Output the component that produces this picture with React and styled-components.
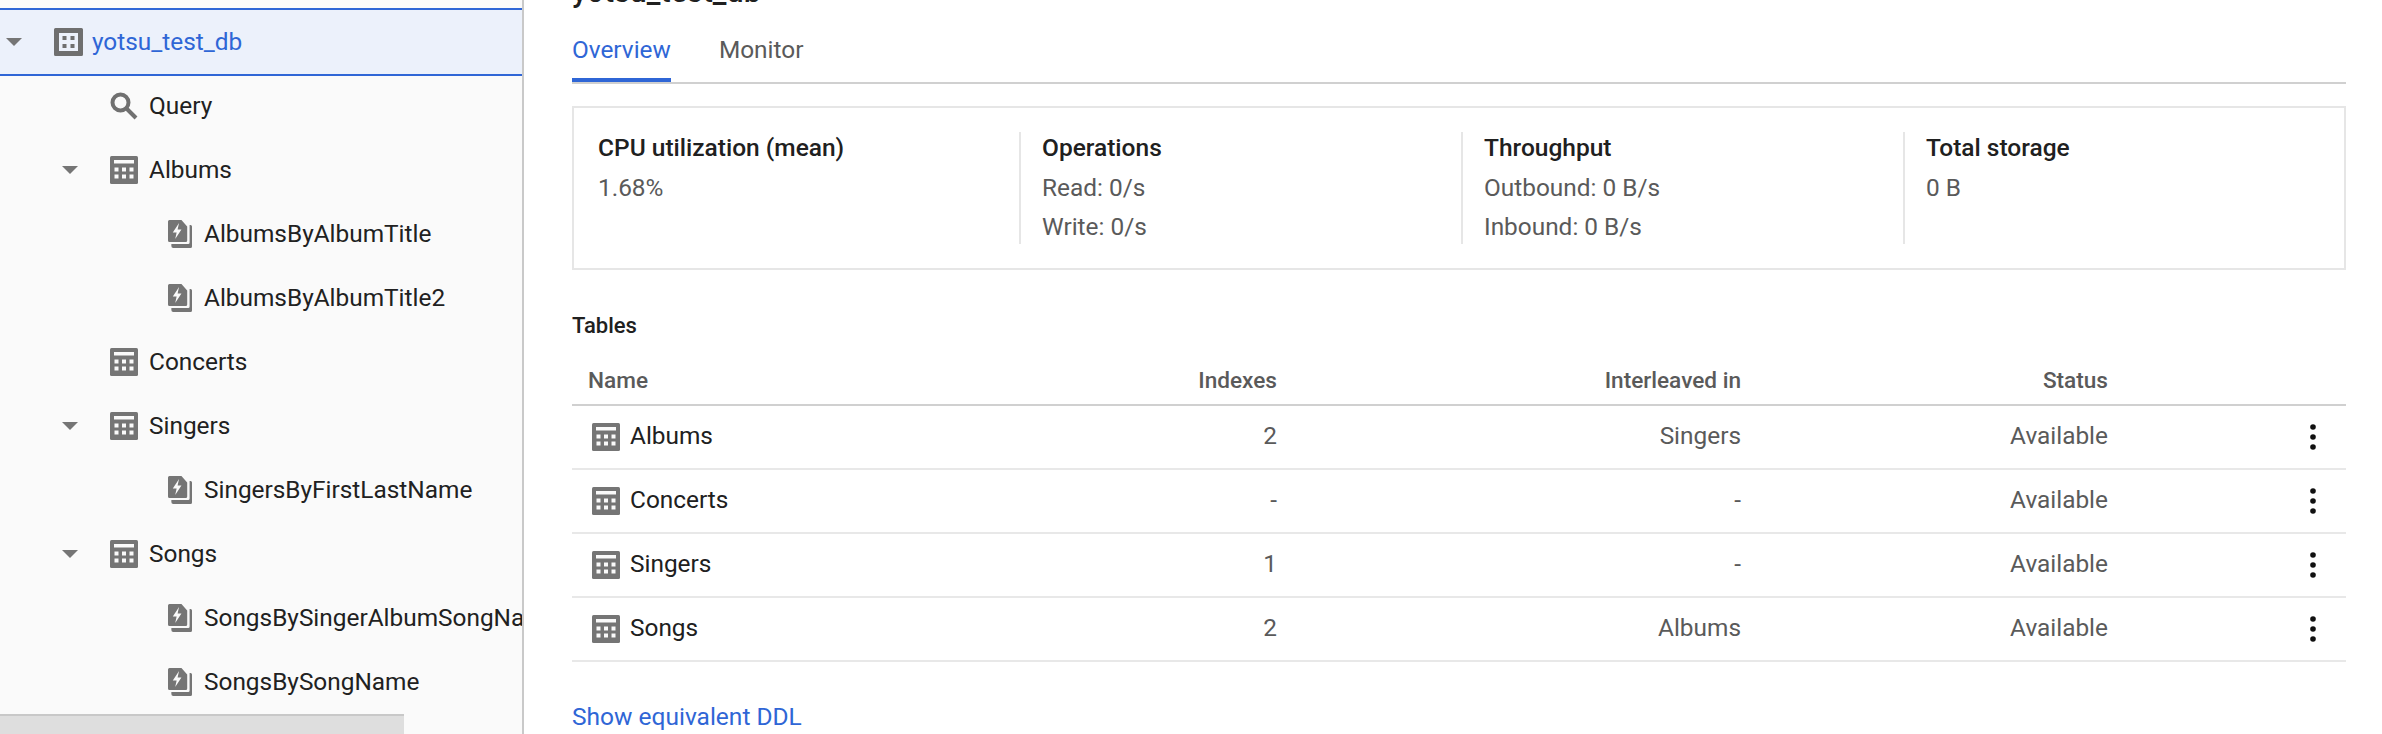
import React from 'react';
import styled, { createGlobalStyle } from 'styled-components';

const Global = createGlobalStyle`
  html, body { margin: 0; padding: 0; height: 734px; overflow: hidden; background: #fff; }
  body { font-family: Roboto, "Liberation Sans", sans-serif; }
`;
const Page = styled.div`display: flex; width: 2382px; height: 734px; overflow: hidden;`;
const Sidebar = styled.aside`
  width: 522px; flex: none; height: 726px; background: #fafafa; border-right: 2px solid #c9c9c9;
  display: flex; flex-direction: column; padding-top: 8px;
`;
const Tree = styled.div`flex: 1; overflow: hidden;`;
const TreeRow = styled.div`
  display: flex; align-items: center; height: 64px; white-space: nowrap; overflow: hidden;
  padding-left: ${p => p.$indent}px; font-size: 24.4px; color: #212121;
`;
const SelectedRow = styled(TreeRow)`
  background: #ecf1fb; color: #2f66d6; margin-bottom: -2px; position: relative;
  border-top: 2px solid #2f66d6; border-bottom: 2px solid #2f66d6;
`;
const CaretSlot = styled.span`display: flex; width: ${p => p.$w}px; flex: none;`;
const Label = styled.span`margin-left: ${p => p.$gap}px; padding-bottom: 2px;`;
const ScrollTrack = styled.div`height: 20px; flex: none; background: #fafafa;`;
const ScrollThumb = styled.div`width: 404px; height: 18px; background: #dedede; border-top: 2px solid #c8c8c8;`;

const Main = styled.main`flex: 1; min-width: 0; padding: 0 36px 0 48px; color: #212121;`;
const Title = styled.h1`margin: -27px 0 27px; height: 38px; line-height: 38px; font-size: 30.5px; font-weight: 500; color: #202020; white-space: nowrap;`;
const Tabs = styled.nav`display: flex; gap: 48px; box-sizing: border-box; height: 46px; border-bottom: 2px solid #d0d0d0;`;
const Tab = styled.span`
  box-sizing: border-box; height: 44px; line-height: 24px;
  font-size: 24.4px; color: ${p => p.$active ? '#2f66d6' : '#5a5a5a'};
  border-bottom: 4px solid ${p => p.$active ? '#2f66d6' : 'transparent'};
`;
const Summary = styled.section`
  margin-top: 22px; height: 164px; box-sizing: border-box; border: 2px solid #e6e6e6;
  padding-top: 24px; display: grid; grid-template-columns: 445px 442px 442px 1fr;
`;
const Cell = styled.div`
  height: 112px; box-sizing: border-box; padding-left: ${p => p.$first ? 24 : 21}px;
  border-left: ${p => p.$first ? 'none' : '2px solid #e6e6e6'};
`;
const CellTitle = styled.div`height: 32px; line-height: 32px; font-size: 24.5px; font-weight: 500; color: #202020;`;
const CellValue = styled.div`height: 40px; line-height: 40px; font-size: 24.4px; color: #5a5a5a; margin-top: ${p => p.$first ? 4 : -1}px;`;
const SectionLabel = styled.h2`margin: 44px 0 22px; height: 24px; line-height: 24px; font-size: 22px; font-weight: 500; color: #202020;`;
const Row = styled.div`
  display: grid; grid-template-columns: 400px 305px 464px 367px 1fr; align-items: center;
  height: ${p => p.$head ? 40 : 62}px; padding-bottom: ${p => p.$head ? 4 : 0}px;
  border-bottom: 2px solid ${p => p.$head ? '#d0d0d0' : '#e8e8e8'};
  color: #5a5a5a; font-size: 24.4px;
`;
const Head = styled.div`font-size: 22.6px; font-weight: 500; color: #5a5a5a; text-align: ${p => p.$left ? 'left' : 'right'}; padding-left: ${p => p.$left ? 16 : 0}px;`;
const NameCell = styled.div`display: flex; align-items: center; gap: 10px; padding-left: 20px; color: #202020;`;
const NameText = styled.span`padding-bottom: 3px;`;
const Num = styled.div`text-align: right; padding-bottom: 3px;`;
const Kebab = styled.div`display: flex; justify-content: flex-end; padding-right: 30px; color: #111;`;
const Link = styled.a`display: block; margin-top: 41px; font-size: 24.5px; line-height: 28px; color: #2f66d6;`;

const Caret = () => <svg width="16" height="8" viewBox="0 0 16 8"><path d="M0 0h16L8 8z" fill="#757575" /></svg>;
const DbIcon = () => (
  <svg width="29" height="28" viewBox="0 0 29 28" style={{flex:'none'}}>
    <path fill="#6f6f6f" fillRule="evenodd" d="M1.5 0h26A1.5 1.5 0 0 1 29 1.5v25a1.5 1.5 0 0 1-1.5 1.5h-26A1.5 1.5 0 0 1 0 26.500v-25A1.500 1.500 0 0 1 1.500 0zM5 5v18h19V5z" />
    <rect x="8.500" y="8" width="4" height="4" fill="#6f6f6f" /><rect x="16.500" y="8" width="4" height="4" fill="#6f6f6f" />
    <rect x="8.500" y="16" width="4" height="4" fill="#6f6f6f" /><rect x="16.500" y="16" width="4" height="4" fill="#6f6f6f" />
  </svg>
);
const SearchIcon = () => (
  <svg width="28" height="28" viewBox="0 0 28 28" style={{flex:'none'}}>
    <circle cx="10.500" cy="10.500" r="8" fill="none" stroke="#707070" strokeWidth="4" />
    <path d="M16.500 16.500l9.500 9.500" stroke="#707070" strokeWidth="4" />
  </svg>
);
const TableIcon = () => (
  <svg width="28" height="28" viewBox="0 0 28 28" style={{flex:'none'}}>
    <rect width="28" height="28" rx="1.500" fill="#757575" />
    <rect x="4" y="4" width="20" height="3.500" fill="#fafafa" />
    {[4.500, 12, 19.500].map(x => [11.500, 18.500].map(y => <rect key={`${x}-${y}`} x={x} y={y} width="4" height="4" fill="#fafafa" />))}
  </svg>
);
const IndexIcon = () => (
  <svg width="24" height="28" viewBox="0 0 25 28" preserveAspectRatio="none" style={{flex:'none'}}>
    <path fill="#757575" d="M3.500 26V24H21a1.500 1.500 0 0 0 1.500-1.500V5h1A1.500 1.500 0 0 1 25 6.500V26.500A1.500 1.500 0 0 1 23.500 28H5.500A2 2 0 0 1 3.500 26z" />
    <path fill="#757575" d="M1.500 0H14l6 6.500V20.500A1.500 1.500 0 0 1 18.500 22H1.500A1.500 1.500 0 0 1 0 20.500V1.500A1.500 1.500 0 0 1 1.500 0z" />
    <path fill="#fafafa" d="M11.500 3L5 12.500h4L7.500 19 14 9.500h-4z" />
  </svg>
);
const Dots = () => (
  <svg width="6" height="26" viewBox="0 0 6 26">
    <circle cx="3" cy="3" r="2.800" fill="currentColor" /><circle cx="3" cy="13" r="2.800" fill="currentColor" /><circle cx="3" cy="23" r="2.800" fill="currentColor" />
  </svg>
);

const tree = [
  { type: 'q', name: 'Query' },
  { type: 't', name: 'Albums', open: true },
  { type: 'i', name: 'AlbumsByAlbumTitle' },
  { type: 'i', name: 'AlbumsByAlbumTitle2' },
  { type: 't', name: 'Concerts' },
  { type: 't', name: 'Singers', open: true },
  { type: 'i', name: 'SingersByFirstLastName' },
  { type: 't', name: 'Songs', open: true },
  { type: 'i', name: 'SongsBySingerAlbumSongName' },
  { type: 'i', name: 'SongsBySongName' },
];
const tables = [
  ['Albums', '2', 'Singers'],
  ['Concerts', '-', '-'],
  ['Singers', '1', '-'],
  ['Songs', '2', 'Albums'],
];
const stats = [
  ['CPU utilization (mean)', ['1.68%']],
  ['Operations', ['Read: 0/s', 'Write: 0/s']],
  ['Throughput', ['Outbound: 0 B/s', 'Inbound: 0 B/s']],
  ['Total storage', ['0 B']],
];

function TreeItem({ item }) {
  if (item.type === 'i') {
    return <TreeRow $indent={168}><IndexIcon /><Label $gap={12}>{item.name}</Label></TreeRow>;
  }
  return (
    <TreeRow $indent={62}>
      <CaretSlot $w={48}>{item.open && <Caret />}</CaretSlot>
      {item.type === 'q' ? <SearchIcon /> : <TableIcon />}
      <Label $gap={11}>{item.name}</Label>
    </TreeRow>
  );
}

export default function App() {
  return (
    <Page>
      <Global />
      <Sidebar>
        <Tree>
          <SelectedRow $indent={6}>
            <CaretSlot $w={48}><Caret /></CaretSlot>
            <DbIcon />
            <Label $gap={9}>yotsu_test_db</Label>
          </SelectedRow>
          {tree.map(item => <TreeItem key={item.name} item={item} />)}
        </Tree>
        <ScrollTrack><ScrollThumb /></ScrollTrack>
      </Sidebar>
      <Main>
        <Title>yotsu_test_db</Title>
        <Tabs>
          <Tab $active>Overview</Tab>
          <Tab>Monitor</Tab>
        </Tabs>
        <Summary>
          {stats.map(([title, values], i) => (
            <Cell key={title} $first={i === 0}>
              <CellTitle>{title}</CellTitle>
              {values.map((v, j) => <CellValue key={v} $first={j === 0}>{v}</CellValue>)}
            </Cell>
          ))}
        </Summary>
        <SectionLabel>Tables</SectionLabel>
        <Row $head>
          <Head $left>Name</Head>
          <Head>Indexes</Head>
          <Head>Interleaved in</Head>
          <Head>Status</Head>
        </Row>
        {tables.map(([name, idx, inter]) => (
          <Row key={name}>
            <NameCell><TableIcon /><NameText>{name}</NameText></NameCell>
            <Num>{idx}</Num>
            <Num>{inter}</Num>
            <Num>Available</Num>
            <Kebab><Dots /></Kebab>
          </Row>
        ))}
        <Link>Show equivalent DDL</Link>
      </Main>
    </Page>
  );
}
